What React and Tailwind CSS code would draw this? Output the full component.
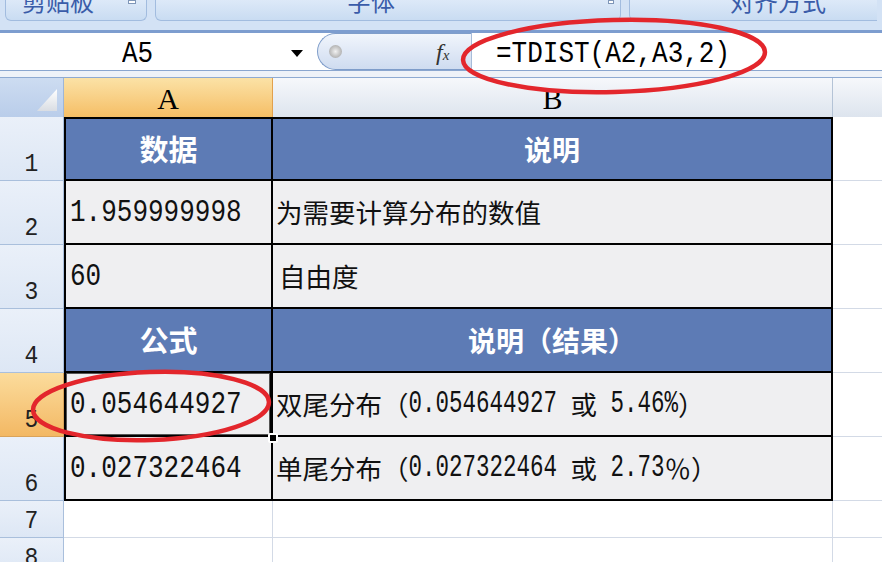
import React from "react";

const MONO = "font-['Liberation_Mono',monospace]";
const CJK = "font-['Noto_Sans_CJK_SC',sans-serif]";

function RowHead({ n, h = "h-[64px]", active = false }) {
  return (
    <div
      className={`${h} w-[64px] shrink-0 flex items-end justify-center pb-[4px] border-b border-r ${
        active
          ? "bg-linear-to-b from-[#fbdc9c] to-[#f3b863] border-[#d9a35a]"
          : "bg-linear-to-b from-[#eaf0f9] to-[#dde7f5] border-[#a9bfdc]"
      } ${MONO} text-[23px] leading-none text-[#222]`}
    >
      <span className="inline-block scale-y-[1.15]">{n}</span>
    </div>
  );
}

function HeadCells({ a, b, first = false }) {
  return (
    <>
      <div
        className={`w-[209px] shrink-0 h-full border-l-2 border-r-2 border-b-2 ${
          first ? "border-t-2" : ""
        } border-black bg-[#5d7bb5] flex items-center justify-center text-white font-bold text-[29px] ${CJK}`}
      >
        {a}
      </div>
      <div
        className={`w-[560px] shrink-0 h-full border-r-2 border-b-2 ${
          first ? "border-t-2" : ""
        } border-black bg-[#5d7bb5] flex items-center justify-center text-white font-bold text-[28px] ${CJK}`}
      >
        {b}
      </div>
    </>
  );
}

function ColC({ h = "h-full" }) {
  return <div className={`flex-1 ${h} bg-white border-b border-[#d3dae6]`} />;
}

function Num({ children }) {
  return (
    <span className={`inline-block scale-y-[1.22] ${MONO} text-[26px] leading-none text-[#111]`}>
      {children}
    </span>
  );
}

function BNum({ children }) {
  return (
    <span className={`inline-block scale-y-[1.38] ${MONO} text-[22.5px] leading-none`}>
      {children}
    </span>
  );
}

export default function App() {
  return (
    <div className="relative w-[882px] h-[562px] overflow-hidden bg-white">
      {/* Ribbon */}
      <div className="h-[33px] bg-[#d3e2f5] border-b-[3px] border-[#7d9dcf] flex items-start gap-[8px] px-[5px]">
        <div className={`relative w-[142px] h-[21px] rounded-b-[6px] border border-t-0 border-[#a2bcdf] bg-linear-to-b from-[#dde9f8] to-[#c9dcf2] overflow-hidden flex items-end pb-[7px] pl-[16px] ${CJK} text-[24px] leading-[24px] text-[#3a5ca9]`}>
          剪贴板
          <div className="absolute right-[10px] top-0 w-[8px] h-[4px] bg-white border border-[#7f96b8]" />
        </div>
        <div className={`relative w-[466px] h-[21px] rounded-b-[6px] border border-t-0 border-[#a2bcdf] bg-linear-to-b from-[#dde9f8] to-[#c9dcf2] overflow-hidden flex items-end pb-[7px] pl-[191px] ${CJK} text-[24px] leading-[24px] text-[#3a5ca9]`}>
          字体
          <div className="absolute right-[6px] top-0 w-[6px] h-[4px] bg-white border border-[#7f96b8]" />
        </div>
        <div className={`flex-1 h-[21px] rounded-bl-[6px] border border-t-0 border-r-0 border-[#a2bcdf] bg-linear-to-b from-[#dde9f8] to-[#c9dcf2] overflow-hidden flex items-end pb-[7px] pl-[100px] ${CJK} text-[24px] leading-[24px] text-[#3a5ca9]`}>
          对齐方式
        </div>
      </div>

      {/* Formula bar */}
      <div className="h-[38px] bg-white border-b border-[#8aa6cf] flex items-stretch">
        <div className="w-[312px] shrink-0 flex items-center pt-[5px] relative">
          <span className={`ml-[122px] inline-block scale-y-[1.15] ${MONO} text-[26px] leading-none text-black`}>A5</span>
          <div className="absolute left-[291px] top-[17px] w-0 h-0 border-l-[6px] border-r-[6px] border-t-[7px] border-l-transparent border-r-transparent border-t-black" />
        </div>
        <div className="w-[154px] shrink-0 ml-[5px] rounded-l-full border border-r-0 border-[#7f9dca] bg-linear-to-b from-[#f1f5fc] to-[#cfdcf0] flex items-center relative">
          <div className="absolute left-[11px] top-[11px] w-[13px] h-[13px] rounded-full bg-radial from-[#f2f2f2] to-[#9a9a9a]" />
          <span className="absolute left-[118px] top-[6px] font-['Liberation_Serif',serif] italic text-[24px] leading-none text-[#333]">
            f<span className="text-[15px]">x</span>
          </span>
        </div>
        <div className="flex-1 border-l border-[#a7bcd9] flex items-center pt-[5px]">
          <span className={`ml-[24px] inline-block scale-y-[1.15] ${MONO} text-[26px] leading-none text-black`}>=TDIST(A2,A3,2)</span>
        </div>
      </div>
      <div className="h-[7px] bg-[#eef2f8] border-b border-[#8eaad2]" />

      {/* Column headers */}
      <div className="h-[39px] flex">
        <div className="w-[64px] shrink-0 h-full bg-linear-to-b from-[#cddcf1] to-[#b9cdea] border-r border-[#9fb6d6] relative">
          <svg className="absolute right-[6px] bottom-[6px]" width="20" height="22" viewBox="0 0 20 22">
            <defs>
              <linearGradient id="tri" x1="0" y1="0" x2="0" y2="1">
                <stop offset="0" stopColor="#ffffff" />
                <stop offset="1" stopColor="#d9dde3" />
              </linearGradient>
            </defs>
            <polygon points="20,0 20,22 0,22" fill="url(#tri)" />
          </svg>
        </div>
        <div className="w-[209px] shrink-0 h-full bg-linear-to-b from-[#fbe2a6] to-[#f5be64] border-r border-[#e2a14d] flex items-end justify-center pb-[3px] font-['Liberation_Serif',serif] text-[30px] leading-none text-black">
          A
        </div>
        <div className="w-[560px] shrink-0 h-full bg-linear-to-b from-[#f6f8fb] to-[#dde4ee] border-r border-[#b4c3d6] flex items-end justify-center pb-[3px] font-['Liberation_Serif',serif] text-[30px] leading-none text-black">
          B
        </div>
        <div className="flex-1 h-full bg-linear-to-b from-[#f6f8fb] to-[#dde4ee]" />
      </div>

      {/* Row 1 */}
      <div className="h-[64px] flex">
        <RowHead n="1" />
        <HeadCells a="数据" b="说明" first />
        <ColC />
      </div>

      {/* Row 2 */}
      <div className="h-[64px] flex">
        <RowHead n="2" />
        <div className="w-[209px] shrink-0 h-full border-l-2 border-r-2 border-b-2 border-black bg-[#efeff1] flex items-center pl-[4px]">
          <Num>1.959999998</Num>
        </div>
        <div className={`w-[560px] shrink-0 h-full border-r-2 border-b-2 border-black bg-[#efeff1] flex items-center pl-[3px] ${CJK} text-[26.5px] text-[#111]`}>
          为需要计算分布的数值
        </div>
        <ColC />
      </div>

      {/* Row 3 */}
      <div className="h-[64px] flex">
        <RowHead n="3" />
        <div className="w-[209px] shrink-0 h-full border-l-2 border-r-2 border-b-2 border-black bg-[#efeff1] flex items-center pl-[4px]">
          <Num>60</Num>
        </div>
        <div className={`w-[560px] shrink-0 h-full border-r-2 border-b-2 border-black bg-[#efeff1] flex items-center pl-[6px] ${CJK} text-[26.5px] text-[#111]`}>
          自由度
        </div>
        <ColC />
      </div>

      {/* Row 4 */}
      <div className="h-[64px] flex">
        <RowHead n="4" />
        <HeadCells a="公式" b="说明（结果）" />
        <ColC />
      </div>

      {/* Row 5 */}
      <div className="h-[64px] flex">
        <RowHead n="5" active />
        <div className="w-[209px] shrink-0 h-full border-l-2 border-r-[3px] border-b-2 border-black bg-[#efeff1] flex items-center pl-[4px] relative">
          <div className="absolute inset-[0px] border border-[#555]" />
          <Num>0.054644927</Num>
        </div>
        <div className={`w-[560px] shrink-0 h-full border-r-2 border-b-2 border-black bg-[#efeff1] flex items-center pl-[3px] ${CJK} text-[26.5px] text-[#111] whitespace-pre`}>
          双尾分布（<BNum>0.054644927 </BNum>或<BNum> 5.46%</BNum>）
        </div>
        <ColC />
      </div>

      {/* Row 6 */}
      <div className="h-[64px] flex">
        <RowHead n="6" />
        <div className="w-[209px] shrink-0 h-full border-l-2 border-r-2 border-b-2 border-black bg-[#efeff1] flex items-center pl-[4px]">
          <Num>0.027322464</Num>
        </div>
        <div className={`w-[560px] shrink-0 h-full border-r-2 border-b-2 border-black bg-[#efeff1] flex items-center pl-[3px] ${CJK} text-[26.5px] text-[#111] whitespace-pre`}>
          单尾分布（<BNum>0.027322464 </BNum>或<BNum> 2.73</BNum>％）
        </div>
        <ColC />
      </div>

      {/* Row 7 */}
      <div className="h-[37px] flex">
        <RowHead n="7" h="h-[37px]" />
        <div className="w-[209px] shrink-0 h-full bg-white border-r border-b border-[#d3dae6]" />
        <div className="w-[560px] shrink-0 h-full bg-white border-r border-b border-[#d3dae6]" />
        <ColC />
      </div>

      {/* Row 8 */}
      <div className="h-[37px] flex">
        <RowHead n="8" h="h-[37px]" />
        <div className="w-[209px] shrink-0 h-full bg-white border-r border-b border-[#d3dae6]" />
        <div className="w-[560px] shrink-0 h-full bg-white border-r border-b border-[#d3dae6]" />
        <ColC />
      </div>

      {/* Fill handle */}
      <div className="absolute left-[268px] top-[433px] w-[10px] h-[10px] bg-black border-2 border-white rounded-[2px]" />

      {/* Red annotation ellipses */}
      <svg className="absolute left-0 top-0 pointer-events-none" width="882" height="562">
        <ellipse cx="614" cy="56" rx="151" ry="36" fill="none" stroke="#e3262c" strokeWidth="4.5" transform="rotate(-1.5 614 56)" />
        <ellipse cx="151" cy="406" rx="118" ry="34" fill="none" stroke="#e3262c" strokeWidth="4.5" transform="rotate(-2 151 406)" />
      </svg>
    </div>
  );
}
